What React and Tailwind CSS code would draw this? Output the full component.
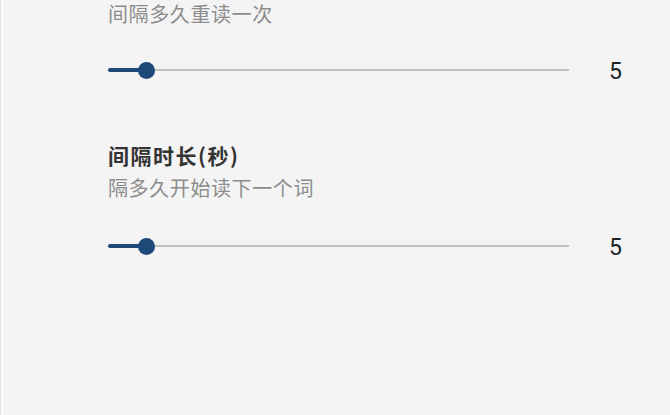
import React from "react";

const cjk = { fontFamily: '"Noto Sans CJK SC", "Noto Sans", sans-serif' };

function SliderRow({ value }) {
  return (
    <div className="flex items-center h-[24px]">
      <div className="relative w-[461px] h-[24px] flex items-center">
        <div className="w-full h-[2px] bg-[#c0c0c0]" />
        <div className="absolute left-0 top-[10px] w-[38px] h-[4px] bg-[#1d4a79] rounded-l-sm" />
        <div className="absolute left-[30px] top-[3.5px] w-[17px] h-[17px] rounded-full bg-[#1d4a79]" />
      </div>
      <div
        className="ml-[40px] pt-[4px] text-[23px] leading-[24px] text-[#1f1f1f]"
        style={{ fontFamily: 'Roboto, "Liberation Sans", sans-serif' }}
      >
        {value}
      </div>
    </div>
  );
}

export default function App() {
  return (
    <div className="w-[670px] h-[415px] overflow-hidden flex bg-[#f4f4f4]">
      <div className="w-[1px] bg-[#e2e2e2]" />
      <div className="w-[2px] bg-[#fbfbfb]" />
      <div className="flex-1 pl-[105px] flex flex-col" style={cjk}>
        <div className="-mt-[3px] text-[20px] leading-[33px] tracking-[0.6px] text-[#8c8c8c]">
          间隔多久重读一次
        </div>
        <div className="mt-[28px]">
          <SliderRow value="5" />
        </div>
        <div className="mt-[57px] text-[21px] leading-[33px] tracking-[1.5px] font-bold text-[#333]">
          间隔时长(秒)
        </div>
        <div className="-mt-[1px] text-[20px] leading-[33px] tracking-[0.6px] text-[#8c8c8c]">
          隔多久开始读下一个词
        </div>
        <div className="mt-[30px]">
          <SliderRow value="5" />
        </div>
      </div>
    </div>
  );
}
